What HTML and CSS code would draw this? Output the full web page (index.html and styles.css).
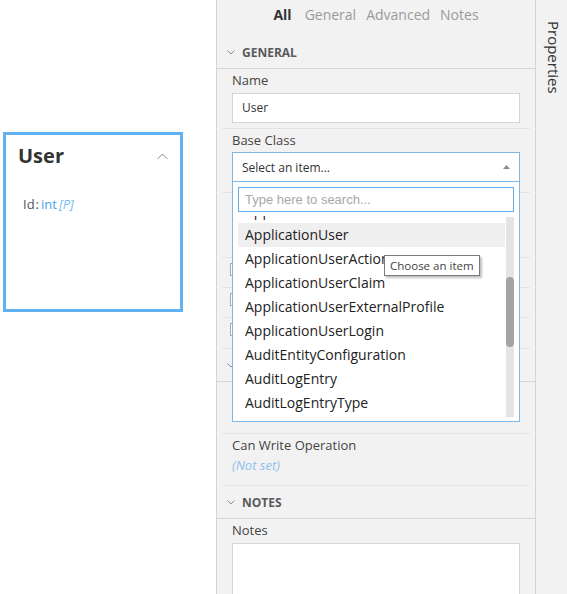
FILE: index.html
```html
<!DOCTYPE html>
<html lang="en">
<head>
  <meta charset="UTF-8">
  <title>Entity Designer</title>
  <link rel="stylesheet" href="styles.css">
</head>
<body>

  <!-- Canvas with the entity card -->
  <div class="canvas">
    <div class="entity">
      <div class="entity-head">
        <span class="entity-name">User</span>
        <svg class="entity-toggle" width="11" height="7" viewBox="0 0 11 7"><polyline points="0.5,6 5.5,1 10.5,6" fill="none" stroke="#8a8a8a" stroke-width="1"/></svg>
      </div>
      <div class="entity-prop">
        <span class="prop-name">Id</span><span class="prop-sep">:</span><span class="prop-type">int</span><span class="prop-flag">[P]</span>
      </div>
    </div>
  </div>

  <!-- Properties panel -->
  <div class="panel">
    <div class="tabs">
      <span class="tab active">All</span>
      <span class="tab">General</span>
      <span class="tab">Advanced</span>
      <span class="tab">Notes</span>
    </div>

    <div class="section-head">
      <svg width="8" height="5" viewBox="0 0 8 5"><polyline points="0.5,0.5 4,4 7.5,0.5" fill="none" stroke="#8e86a6" stroke-width="1"/></svg>
      GENERAL
    </div>

    <div class="row">
      <div class="label">Name</div>
      <div class="input">User</div>
    </div>

    <div class="row row-base">
      <div class="label">Base Class</div>
      <div class="select-wrap">
        <div class="select">
          <span>Select an item...</span>
          <svg width="7" height="4" viewBox="0 0 7 4"><polygon points="0,4 3.5,0 7,4" fill="#8a8a8a"/></svg>
        </div>

        <!-- open dropdown -->
        <div class="popup">
          <div class="search">Type here to search...</div>
          <div class="list-wrap">
            <div class="list">
              <div class="list-inner">
                <div class="item">ApplicationRoleClaim</div>
                <div class="item hover">ApplicationUser</div>
                <div class="item">ApplicationUserAction</div>
                <div class="item">ApplicationUserClaim</div>
                <div class="item">ApplicationUserExternalProfile</div>
                <div class="item">ApplicationUserLogin</div>
                <div class="item">AuditEntityConfiguration</div>
                <div class="item">AuditLogEntry</div>
                <div class="item">AuditLogEntryType</div>
              </div>
            </div>
            <div class="scrollbar"><div class="thumb"></div></div>
          </div>
          <div class="tooltip">Choose an item</div>
        </div>
      </div>
    </div>

    <!-- rows under the open dropdown -->
    <div class="row row-table">
      <div class="label-space"></div>
      <div class="input"></div>
    </div>
    <div class="row row-check"><span class="check"></span></div>
    <div class="row row-check"><span class="check"></span></div>
    <div class="row row-check last"><span class="check"></span></div>

    <div class="section-head">
      <svg width="8" height="5" viewBox="0 0 8 5"><polyline points="0.5,0.5 4,4 7.5,0.5" fill="none" stroke="#8e86a6" stroke-width="1"/></svg>
    </div>

    <div class="row row-value">
      <div class="label-space"></div>
      <div class="label-space"></div>
    </div>
    <div class="row row-value">
      <div class="label">Can Write Operation</div>
      <div class="not-set">(Not set)</div>
    </div>

    <div class="section-head">
      <svg width="8" height="5" viewBox="0 0 8 5"><polyline points="0.5,0.5 4,4 7.5,0.5" fill="none" stroke="#8e86a6" stroke-width="1"/></svg>
      NOTES
    </div>

    <div class="row row-notes">
      <div class="label">Notes</div>
      <div class="textarea"></div>
    </div>
  </div>

  <!-- Side tab strip -->
  <div class="side">
    <span class="side-tab">Properties</span>
  </div>

</body>
</html>
```

FILE: styles.css
```css
body {
  margin: 0;
  padding: 0;
  display: flex;
  height: 594px;
  overflow: hidden;
  background-color: #fff;
  font-family: "Open Sans", Arial, sans-serif;
  color: #444;
}

/* canvas */
.canvas {
  width: 216px;
  flex-shrink: 0;
  background-color: #fff;
}

.entity {
  box-sizing: border-box;
  width: 180px;
  height: 180px;
  margin: 132px 0 0 3px;
  border: 3px solid #62b1f0;
  padding: 6px 12px 0 12px;
}

.entity-head {
  display: flex;
  align-items: center;
  justify-content: space-between;
  height: 28px;
}

.entity-name {
  font-size: 20px;
  font-weight: bold;
  color: #333;
}

.entity-toggle {
  margin: 3px 0 0 0;
}

.entity-prop {
  margin: 26px 0 0 5px;
  font-size: 13px;
  line-height: 18px;
  color: #555;
}

.prop-sep {
  margin: 0 2px 0 1px;
}

.prop-type {
  color: #4a9fe6;
}

.prop-flag {
  color: #7dbdf2;
  font-style: italic;
  margin-left: 2px;
}

/* panel */
.panel {
  width: 318px;
  flex-shrink: 0;
  border-left: 1px solid #d4d4d4;
  background-color: #f2f2f2;
  position: relative;
  overflow: hidden;
}

.tabs {
  display: flex;
  justify-content: center;
  gap: 10px;
  height: 36px;
  padding-top: 5px;
  box-sizing: border-box;
  font-size: 14px;
  line-height: 20px;
  color: #9a9a9a;
}

.tab.active {
  color: #333;
  font-weight: bold;
  margin-right: 3px;
}

.section-head {
  display: flex;
  align-items: center;
  gap: 7px;
  height: 32px;
  padding-left: 10px;
  border-bottom: 1px solid #d6d6d6;
  font-size: 12px;
  font-weight: bold;
  color: #5a5a5a;
}

.row {
  margin: 0 5px 0 5px;
  padding: 1px 10px 5px 10px;
  border-bottom: 1px solid #e4e4e4;
}

.label {
  font-size: 13px;
  line-height: 20px;
  color: #444;
}

.label-space {
  height: 20px;
}

.input {
  box-sizing: border-box;
  height: 30px;
  margin-top: 3px;
  padding-left: 9px;
  background-color: #fff;
  border: 1px solid #d6d6d6;
  font-size: 12px;
  line-height: 28px;
  color: #333;
}

.row-base {
  padding-bottom: 10px;
  position: relative;
  z-index: 2;
}

.select-wrap {
  position: relative;
  margin-top: 2px;
}

.select {
  box-sizing: border-box;
  height: 30px;
  display: flex;
  align-items: center;
  justify-content: space-between;
  padding: 0 9px 0 9px;
  background-color: #fff;
  border: 1px solid #7db8ea;
  font-size: 12px;
  color: #333;
}

.popup {
  position: absolute;
  top: 29px;
  left: 0;
  right: 0;
  height: 241px;
  box-sizing: border-box;
  padding: 5px 5px 4px 5px;
  background-color: #fff;
  border: 1px solid #7db8ea;
}

.search {
  box-sizing: border-box;
  height: 25px;
  padding-left: 6px;
  border: 1px solid #6aaee8;
  font-family: "Liberation Sans", Arial, sans-serif;
  font-size: 13px;
  line-height: 23px;
  color: #a8a8a8;
}

.list-wrap {
  display: flex;
  margin-top: 4px;
  height: 201px;
}

.list {
  flex: 1;
  overflow: hidden;
}

.list-inner {
  margin-top: -17px;
}

.item {
  height: 24px;
  padding-left: 7px;
  font-size: 14px;
  line-height: 24px;
  color: #222;
  white-space: nowrap;
}

.item.hover {
  background-color: #efefef;
  margin-right: 1px;
}

.scrollbar {
  width: 8px;
  margin-top: 1px;
  background-color: #e4e4e4;
  position: relative;
}

.thumb {
  position: absolute;
  top: 60px;
  left: 0;
  width: 8px;
  height: 70px;
  border-radius: 4px;
  background-color: #a4a4a4;
}

.tooltip {
  position: absolute;
  top: 73px;
  left: 151px;
  padding: 0 5px;
  height: 19px;
  background-color: #fff;
  border: 1px solid #7a7a7a;
  box-shadow: 2px 2px 2px rgba(0, 0, 0, 0.25);
  font-size: 11.5px;
  line-height: 19px;
  color: #444;
  white-space: nowrap;
}

.row-table {
  padding-bottom: 10px;
}

.row-check {
  height: 24px;
  padding-top: 5px;
  padding-bottom: 0;
  display: flex;
  align-items: flex-start;
}

.row-check.last {
  height: 25px;
}

.check {
  width: 11px;
  height: 11px;
  margin-left: -2px;
  background-color: #fff;
  border: 1px solid #a8a8a8;
}

.row-value {
  padding-bottom: 10px;
}

.not-set {
  font-size: 13px;
  line-height: 20px;
  font-style: italic;
  color: #8ec0ee;
}

.row-notes {
  border-bottom: none;
}

.textarea {
  height: 60px;
  margin-top: 3px;
  background-color: #fff;
  border: 1px solid #d6d6d6;
}

/* side strip */
.side {
  flex: 1;
  border-left: 1px solid #d4d4d4;
  background-color: #f2f2f2;
}

.side-tab {
  display: block;
  writing-mode: vertical-rl;
  padding: 21px 0 0 8px;
  font-size: 15px;
  color: #333;
}
```
